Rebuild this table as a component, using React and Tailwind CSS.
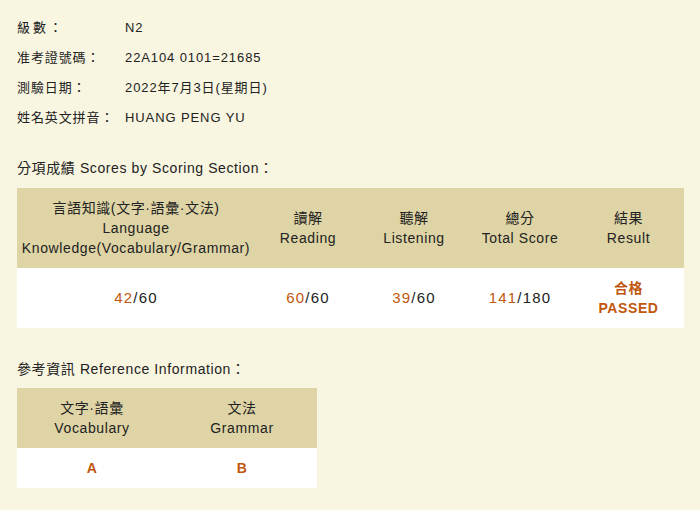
import React from 'react';

const font = { fontFamily: '"Liberation Sans", "Noto Sans CJK TC", sans-serif' };

const info = [
	['級數：', 'N2', 'tracking-[3px]'],
	['准考證號碼：', '22A104 0101=21685', ''],
	['測驗日期：', '2022年7月3日(星期日)', ''],
	['姓名英文拼音：', 'HUANG PENG YU', ''],
];

const headers = [
	['言語知識(文字·語彙·文法)', 'Language', 'Knowledge(Vocabulary/Grammar)'],
	['讀解', 'Reading'],
	['聽解', 'Listening'],
	['總分', 'Total Score'],
	['結果', 'Result'],
];

const scores = [
	['42', '60'],
	['60', '60'],
	['39', '60'],
	['141', '180'],
];

const App = () => {
	return (
		<div className="min-h-[510px] w-[700px] bg-[#f8f5e0] pl-[17px] pt-[13px] text-[13px] tracking-[0.9px] text-[#222]" style={font}>
			{info.map(([label, value, extra], i) => (
				<div key={i} className="flex h-[30px] items-center">
					<div className={'w-[108px] ' + extra}>{label}</div>
					<div>{value}</div>
				</div>
			))}

			<div className="mt-[25px] mb-[10px] text-[14px] leading-[20px] tracking-[0.6px]">分項成績 Scores by Scoring Section：</div>

			<div className="grid w-[667px] grid-cols-[238px_106px_106px_106px_111px] text-[14px] leading-[20px] tracking-[0.6px]">
				{headers.map((lines, i) => (
					<div key={i} className="flex h-[80px] flex-col items-center justify-center bg-[#ded4a5] text-center">
						{lines.map((l, j) => (
							<div key={j}>{l}</div>
						))}
					</div>
				))}
				{scores.map(([got, total], i) => (
					<div key={i} className="flex h-[60px] items-center justify-center bg-white text-[15px] tracking-[1.2px]">
						<span className="text-[#c0570d]">{got}</span>/{total}
					</div>
				))}
				<div className="flex h-[60px] flex-col items-center justify-center bg-white font-bold text-[#c0570d]">
					<div>合格</div>
					<div>PASSED</div>
				</div>
			</div>

			<div className="mt-[31px] mb-[9px] text-[14px] leading-[20px] tracking-[0.6px]">參考資訊 Reference Information：</div>

			<div className="grid w-[300px] grid-cols-2 text-[14px] leading-[20px] tracking-[0.6px]">
				<div className="flex h-[60px] flex-col items-center justify-center bg-[#ded4a5]">
					<div>文字·語彙</div>
					<div>Vocabulary</div>
				</div>
				<div className="flex h-[60px] flex-col items-center justify-center bg-[#ded4a5]">
					<div>文法</div>
					<div>Grammar</div>
				</div>
				<div className="flex h-[40px] items-center justify-center bg-white font-bold text-[#c0570d]">A</div>
				<div className="flex h-[40px] items-center justify-center bg-white font-bold text-[#c0570d]">B</div>
			</div>
		</div>
	);
};

export default App;
